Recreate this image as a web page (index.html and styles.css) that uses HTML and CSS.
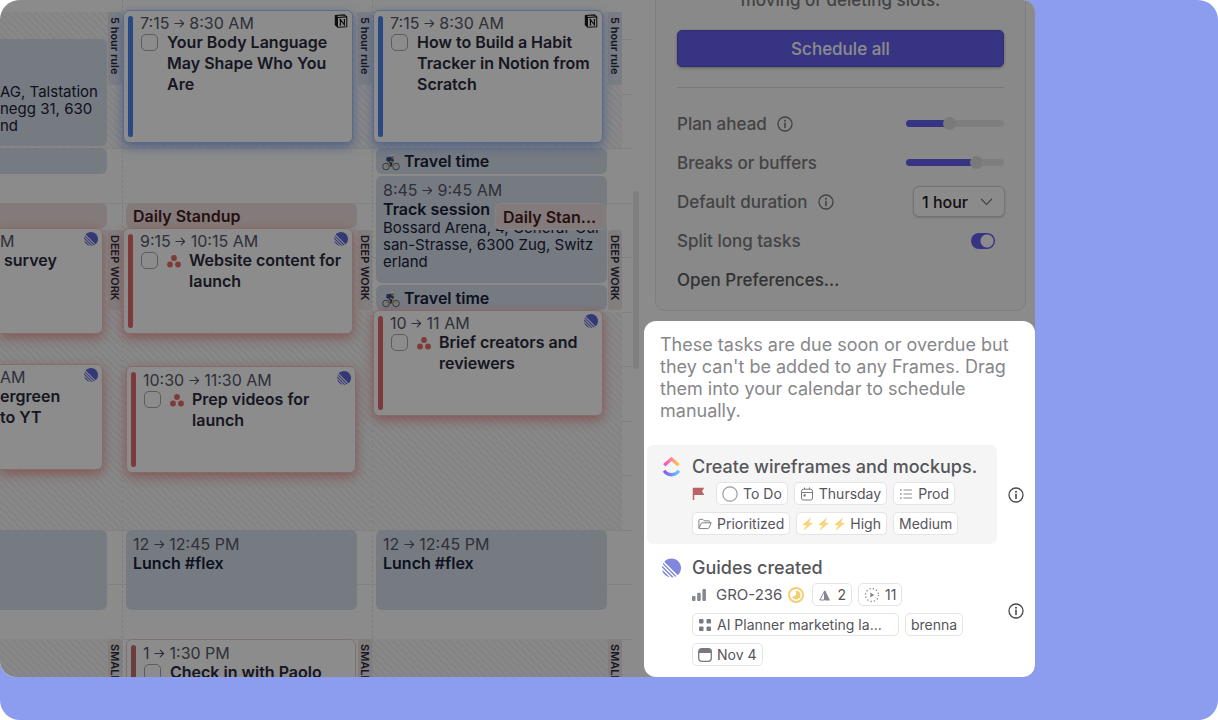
FILE: index.html
```html
<!DOCTYPE html>
<html lang="en">
<head>
    <meta charset="UTF-8">
    <meta name="viewport" content="width=device-width, initial-scale=1.0">
    <title>Planner</title>
    <link rel="stylesheet" href="styles.css">
</head>
<body>
    <!-- Shared icons -->
    <svg class="sprite" aria-hidden="true">
        <symbol id="arrow" viewBox="0 0 12 12">
            <path d="M1 6h9.5M6.8 2.3L10.5 6l-3.7 3.7" fill="none" stroke="currentColor" stroke-width="1.2" stroke-linecap="round" stroke-linejoin="round"/>
        </symbol>
        <symbol id="info" viewBox="0 0 16 16">
            <circle cx="8" cy="8" r="7" fill="none" stroke="currentColor" stroke-width="1.3"/>
            <circle cx="8" cy="4.8" r="1" fill="currentColor"/>
            <path d="M8 7.4v4" stroke="currentColor" stroke-width="1.6" stroke-linecap="round"/>
        </symbol>
        <symbol id="linear" viewBox="0 0 100 100">
            <path fill="currentColor" d="M1.2 61.5c-.2-1 .9-1.6 1.6-.8l36.5 36.5c.7.7.1 1.8-.8 1.6C20.1 94.4 5.6 79.9 1.2 61.5zM0 46.9c0 .3.1.5.3.7l52.100 52.100c.2.2.4.3.7.3 2.4-.2 4.700-.5 7-.9.8-.2 1.100-1.100.5-1.700L2.600 39.400c-.6-.6-1.500-.3-1.700.5-.4 2.300-.8 4.600-.9 7zM4.200 29.700c-.2.4-.1.800.2 1.100l64.800 64.800c.3.3.7.4 1.100.2 1.800-.8 3.500-1.700 5.100-2.700.5-.3.6-1.100.2-1.500L8.400 24.400c-.4-.4-1.200-.3-1.500.2-1 1.600-1.900 3.300-2.700 5.100zM12.700 18.100c-.4-.4-.4-1 0-1.400C21.800 6.500 35.200 0 50 0c27.600 0 50 22.400 50 50 0 14.900-6.500 28.200-16.700 37.400-.4.4-1 .3-1.400 0z"/>
        </symbol>
        <symbol id="notion" viewBox="0 0 16 16">
            <path d="M1.500 1.600L12 1l2.600 2.300v11.200l-10.300.6L1.500 12.500z" fill="#fff" stroke="#161616" stroke-width="1.200" stroke-linejoin="round"/>
            <path d="M1.500 1.600l3 2.300v11.200l-3-2.600z" fill="#161616"/>
            <path d="M1.500 1.600l3 2.300 10.100-.6" fill="none" stroke="#161616" stroke-width="1.200"/>
            <path d="M7.300 12.500V6.500l4.600 6V6.500M6.400 6.400h1.800M11 6.300h1.800M6.400 12.600h1.800" fill="none" stroke="#161616" stroke-width="1.300"/>
        </symbol>
        <symbol id="asana" viewBox="0 0 14 13">
            <g fill="currentColor"><circle cx="7" cy="3" r="2.900"/><circle cx="3" cy="9.500" r="2.900"/><circle cx="11" cy="9.500" r="2.900"/></g>
        </symbol>
        <symbol id="cyclist" viewBox="0 0 18 17">
            <g fill="none" stroke="#5f6466" stroke-width="1"><circle cx="4" cy="12.500" r="3.300"/><circle cx="14" cy="12.500" r="3.300"/></g>
            <path d="M4 12.500l3-3.500h5l2 3.500M7 9l2.500 3.500L12 9" fill="none" stroke="#c0b45c" stroke-width="1"/>
            <path d="M4.500 3.500L9 2.600l3.200 3.600-1.200 1.800-2.800-1.600-1 2-3-2z" fill="#35508c"/>
            <path d="M7.500 8l2 1.500-1 3" fill="none" stroke="#26304c" stroke-width="1.500"/>
            <circle cx="10.500" cy="3" r="1.600" fill="#c69a73"/>
            <path d="M7.800 2.300C8.300.2 11.500 0 12.300 2z" fill="#f8fafc"/>
        </symbol>
        <symbol id="bolt" viewBox="0 0 12 14">
            <path d="M9.500.5L.8 8h4.400l-3 5.500L11.200 6H6.800z" fill="#f8d77a" stroke="#efc55f" stroke-width=".5"/>
        </symbol>
    </svg>

    <div class="page">
        <main class="app">
            <section class="calendar" aria-label="Calendar">
                <div class="days">
                    <div class="day day-cut">
                        <div class="frame t-0715 to-0830"></div>
                        <div class="frame-label blue t-0715"><span>5 hour rule</span></div>
                        <div class="event tall t-0730 to-0830">
                            <p>AG, Talstation<br>negg 31, 630<br>nd</p>
                        </div>
                        <div class="event t-0830 to-0845"></div>
                        <div class="event red t-0900 to-0915"></div>
                        <div class="frame t-0915 to-1200"></div>
                        <div class="frame-label red t-0915"><span>DEEP WORK</span></div>
                        <article class="card red lifted t-0915 to-1015">
                            <header><time>M</time><svg class="source linear"><use href="#linear"/></svg></header>
                            <h3 class="last-word">survey</h3>
                        </article>
                        <article class="card red lifted t-1030 to-1130">
                            <header><time>AM</time><svg class="source linear"><use href="#linear"/></svg></header>
                            <h3>ergreen<br>to YT</h3>
                        </article>
                        <div class="event t-1200 to-1245"></div>
                        <div class="frame t-1300 to-1330"></div>
                        <div class="frame-label red t-1300"><span>SMALL TASKS</span></div>
                    </div>

                    <div class="day">
                        <div class="frame t-0715 to-0830"></div>
                        <div class="frame-label blue t-0715"><span>5 hour rule</span></div>
                        <article class="card blue lifted t-0715 to-0830">
                            <header><time>7:15 <svg class="arrow"><use href="#arrow"/></svg> 8:30 AM</time><svg class="source"><use href="#notion"/></svg></header>
                            <label class="task"><input type="checkbox"><span>Your Body Language May Shape Who You Are</span></label>
                        </article>
                        <div class="event red t-0900 to-0915"><h3>Daily Standup</h3></div>
                        <div class="frame t-0915 to-1200"></div>
                        <div class="frame-label red t-0915"><span>DEEP WORK</span></div>
                        <article class="card red lifted t-0915 to-1015">
                            <header><time>9:15 <svg class="arrow"><use href="#arrow"/></svg> 10:15 AM</time><svg class="source linear"><use href="#linear"/></svg></header>
                            <label class="task"><input type="checkbox"><svg class="asana"><use href="#asana"/></svg><span>Website content for launch</span></label>
                        </article>
                        <article class="card red t-1030 to-1130">
                            <header><time>10:30 <svg class="arrow"><use href="#arrow"/></svg> 11:30 AM</time><svg class="source linear"><use href="#linear"/></svg></header>
                            <label class="task"><input type="checkbox"><svg class="asana"><use href="#asana"/></svg><span>Prep videos for launch</span></label>
                        </article>
                        <div class="event t-1200 to-1245">
                            <time>12 <svg class="arrow"><use href="#arrow"/></svg> 12:45 PM</time>
                            <h3>Lunch #flex</h3>
                        </div>
                        <div class="frame-label red t-1300"><span>SMALL TASKS</span></div>
                        <article class="card plain t-1300 to-1330">
                            <header><time>1 <svg class="arrow"><use href="#arrow"/></svg> 1:30 PM</time></header>
                            <label class="task"><input type="checkbox"><span>Check in with Paolo</span></label>
                        </article>
                    </div>

                    <div class="day">
                        <div class="frame t-0715 to-0830"></div>
                        <div class="frame-label blue t-0715"><span>5 hour rule</span></div>
                        <article class="card blue lifted t-0715 to-0830">
                            <header><time>7:15 <svg class="arrow"><use href="#arrow"/></svg> 8:30 AM</time><svg class="source"><use href="#notion"/></svg></header>
                            <label class="task"><input type="checkbox"><span>How to Build a Habit Tracker in Notion from Scratch</span></label>
                        </article>
                        <div class="event t-0830 to-0845"><h3><svg class="cyclist"><use href="#cyclist"/></svg>Travel time</h3></div>
                        <div class="event t-0845 to-0945">
                            <time>8:45 <svg class="arrow"><use href="#arrow"/></svg> 9:45 AM</time>
                            <h3>Track session</h3>
                            <p>Bossard Arena, 4, General-Gui<br>san-Strasse, 6300 Zug, Switz<br>erland</p>
                        </div>
                        <div class="event red overlap t-0900 to-0915"><h3>Daily Stan...</h3></div>
                        <div class="event t-0945 to-1000"><h3><svg class="cyclist"><use href="#cyclist"/></svg>Travel time</h3></div>
                        <div class="frame t-1000 to-1200"></div>
                        <div class="frame-label red t-0915"><span>DEEP WORK</span></div>
                        <article class="card red lifted t-1000 to-1100">
                            <header><time>10 <svg class="arrow"><use href="#arrow"/></svg> 11 AM</time><svg class="source linear"><use href="#linear"/></svg></header>
                            <label class="task"><input type="checkbox"><svg class="asana"><use href="#asana"/></svg><span>Brief creators and reviewers</span></label>
                        </article>
                        <div class="event t-1200 to-1245">
                            <time>12 <svg class="arrow"><use href="#arrow"/></svg> 12:45 PM</time>
                            <h3>Lunch #flex</h3>
                        </div>
                        <div class="frame t-1300 to-1330"></div>
                        <div class="frame-label red t-1300"><span>SMALL TASKS</span></div>
                    </div>
                </div>
                <div class="scrollbar"></div>
            </section>

            <aside class="sidebar">
                <form class="planner">
                    <p class="hint">moving or deleting slots.</p>
                    <button type="button" class="schedule">Schedule all</button>
                    <hr>
                    <div class="setting">
                        <label for="ahead">Plan ahead</label>
                        <svg class="info"><use href="#info"/></svg>
                        <input type="range" id="ahead" class="ahead" min="0" max="100" value="43">
                    </div>
                    <div class="setting">
                        <label for="breaks">Breaks or buffers</label>
                        <input type="range" id="breaks" class="breaks" min="0" max="100" value="75">
                    </div>
                    <div class="setting">
                        <label for="duration">Default duration</label>
                        <svg class="info"><use href="#info"/></svg>
                        <span class="select">
                            <select id="duration"><option>1 hour</option></select>
                            <svg viewBox="0 0 14 8"><path d="M1.500 1l5.500 5.500L12.500 1" fill="none" stroke="currentColor" stroke-width="1.300" stroke-linecap="round"/></svg>
                        </span>
                    </div>
                    <div class="setting">
                        <label for="split">Split long tasks</label>
                        <input type="checkbox" id="split" class="switch" checked>
                    </div>
                    <div class="setting"><a href="#">Open Preferences...</a></div>
                </form>

                <section class="unplanned">
                    <p>These tasks are due soon or overdue but they can't be added to any Frames. Drag them into your calendar to schedule manually.</p>

                    <article class="todo">
                        <div class="todo-body active">
                            <svg class="logo" viewBox="0 0 18 20">
                                <defs>
                                    <linearGradient id="warm"><stop offset="0" stop-color="#f04fd0"/><stop offset="1" stop-color="#ffc94d"/></linearGradient>
                                    <linearGradient id="cool"><stop offset="0" stop-color="#8d56f5"/><stop offset="1" stop-color="#62c8f8"/></linearGradient>
                                </defs>
                                <path d="M1.800 8.200L9 2l7.200 6.200" fill="none" stroke="url(#warm)" stroke-width="3.400"/>
                                <path d="M1.600 13.800c4 5.200 10.800 5.200 14.800 0" fill="none" stroke="url(#cool)" stroke-width="3.400"/>
                            </svg>
                            <div>
                                <h2>Create wireframes and mockups.</h2>
                                <div class="tags">
                                    <svg class="flag" viewBox="0 0 12 13"><path d="M1 1v12" stroke="#b86464" stroke-width="1.500"/><path d="M1 .8h10.800L9.500 4.300l2.300 3.700H1z" fill="#b86464"/></svg>
                                    <span class="tag"><svg class="wide" viewBox="0 0 16 16"><circle cx="8" cy="8" r="7.200" fill="none" stroke="#9a9da6" stroke-width="1.200"/></svg>To Do</span>
                                    <span class="tag"><svg viewBox="0 0 14 14"><g fill="none" stroke="#77797f"><rect x="1.500" y="2.200" width="11" height="10.800" rx="2"/><path d="M1.500 5.500h11M4.500.5v2M9.500.5v2"/></g><rect x="3.500" y="7.300" width="2.200" height="2.200" fill="#77797f"/></svg>Thursday</span>
                                    <span class="tag"><svg viewBox="0 0 14 14"><path d="M4.500 3H13M4.500 7H13M4.500 11H13" stroke="#8b8d92"/><path d="M1 3h1.600M1 7h1.600M1 11h1.600" stroke="#8b8d92" stroke-width="1.400"/></svg>Prod</span>
                                    <span class="tag"><svg viewBox="0 0 15 12"><path d="M1 10.500V2.200C1 1.500 1.400 1 2.200 1h3l1.500 1.600h4.800c.7 0 1.100.4 1.100 1.100v1M1 10.500l2.600-5.200c.2-.4.500-.6 1-.6h9.600L11.800 10c-.3.6-.6.9-1.200.9H1.400z" fill="none" stroke="#77797f" stroke-linejoin="round"/></svg>Prioritized</span>
                                    <span class="tag"><svg class="bolt"><use href="#bolt"/></svg><svg class="bolt"><use href="#bolt"/></svg><svg class="bolt"><use href="#bolt"/></svg>High</span>
                                    <span class="tag">Medium</span>
                                </div>
                            </div>
                        </div>
                        <button type="button" class="more" aria-label="Details"><svg class="info"><use href="#info"/></svg></button>
                    </article>

                    <article class="todo">
                        <div class="todo-body">
                            <svg class="logo linear"><use href="#linear"/></svg>
                            <div>
                                <h2>Guides created</h2>
                                <div class="tags">
                                    <svg class="bars" viewBox="0 0 14 12"><g fill="#85878c"><rect y="7" width="3.500" height="5" rx="1"/><rect x="5.200" y="3.800" width="3.500" height="8.200" rx="1"/><rect x="10.400" width="3.500" height="12" rx="1"/></g></svg>
                                    <span class="plain-tag">GRO-236</span>
                                    <svg class="progress" viewBox="0 0 16 16"><circle cx="8" cy="8" r="7" fill="none" stroke="#f2cf72" stroke-width="2"/><path d="M8 3.500a4.500 4.500 0 1 1-4 6.600L8 8z" fill="#f2cf72"/></svg>
                                    <span class="tag estimate"><svg viewBox="0 0 14 14"><path d="M6.500 3v9H1.800z" fill="none" stroke="#85878c" stroke-linejoin="round"/><path d="M7 2l5 10.500H7z" fill="#85878c"/></svg>2</span>
                                    <span class="tag"><svg class="wide" viewBox="0 0 16 16"><circle cx="8" cy="8" r="6.500" fill="none" stroke="#85878c" stroke-width="1.300" stroke-dasharray="1.300 2.100"/><path d="M6.300 5.500L10.300 8l-4 2.500z" fill="#85878c"/></svg>11</span>
                                    <span class="tag project"><svg viewBox="0 0 14 14"><g fill="#77797f"><rect x="1" y="1" width="4.500" height="4.500" rx="1"/><rect x="8.500" y="1" width="4.500" height="4.500" rx="1"/><rect x="1" y="8.500" width="4.500" height="4.500" rx="1"/><rect x="8.500" y="8.500" width="4.500" height="4.500" rx="1"/></g></svg>AI Planner marketing la...</span>
                                    <span class="tag">brenna</span>
                                    <span class="tag"><svg viewBox="0 0 14 14"><rect x=".7" y=".7" width="12.600" height="12.600" rx="3" fill="none" stroke="#77797f" stroke-width="1.300"/><path d="M.7 5V3.500C.7 1.900 1.900.7 3.500.7h7c1.600 0 2.800 1.200 2.800 2.800V5z" fill="#77797f"/></svg>Nov 4</span>
                                </div>
                            </div>
                        </div>
                        <button type="button" class="more" aria-label="Details"><svg class="info"><use href="#info"/></svg></button>
                    </article>
                </section>
            </aside>

            <div class="backdrop"></div>
        </main>
    </div>
</body>
</html>
```

FILE: styles.css
```css
* {
    box-sizing: border-box;
}
body {
    margin: 0;
    background-color: white;
    font-family: Inter, sans-serif;
    font-size: 15px;
    color: #2a2a3c;
}
h2, h3, p {
    margin: 0;
}
.sprite {
    display: none;
}
.page {
    display: flex;
    height: 100vh;
    padding: 0 183px 43px 0;
    border-radius: 20px;
    background-color: #8c9df0;
    overflow: hidden;
}
.app {
    position: relative;
    display: flex;
    flex: 1;
    border-radius: 16px 12px 12px 16px;
    background-color: #fdfdfd;
    overflow: hidden;
}
/* Dims everything except the highlighted task list */
.backdrop {
    position: absolute;
    inset: 0;
    background-color: rgba(0, 0, 0, 0.45);
    z-index: 2;
}

/* Calendar */
.calendar {
    display: flex;
    flex: 1;
    min-width: 0;
}
.days {
    display: grid;
    grid-template-columns: 122px 1fr 1fr;
    flex: 1;
    padding-right: 11px;
    /* half-hour lines */
    background-image: linear-gradient(#ececec 1px, transparent 1px, transparent 55px, #ececec 55px, #ececec 56px, transparent 56px);
    background-size: 100% 109px;
    background-position: 0 39px;
}
.day {
    display: grid;
    /* one row per quarter hour, from 7:15 */
    grid-template-rows: 12px 27px 28px 27px repeat(6, 27px 27px 28px 27px);
    grid-template-columns: 1fr 14px;
    min-width: 0;
    border-left: 1px dashed #e6e6e6;
}
.day-cut {
    border-left: none;
}
.t-0715 { grid-row-start: 2; }
.t-0730 { grid-row-start: 3; }
.t-0830 { grid-row-start: 7; }
.t-0845 { grid-row-start: 8; }
.t-0900 { grid-row-start: 9; }
.t-0915 { grid-row-start: 10; }
.t-0945 { grid-row-start: 12; }
.t-1000 { grid-row-start: 13; }
.t-1030 { grid-row-start: 15; }
.t-1200 { grid-row-start: 21; }
.t-1300 { grid-row-start: 25; }
.to-0830 { grid-row-end: 7; }
.to-0845 { grid-row-end: 8; }
.to-0915 { grid-row-end: 10; }
.to-0945 { grid-row-end: 12; }
.to-1000 { grid-row-end: 13; }
.to-1015 { grid-row-end: 14; }
.to-1100 { grid-row-end: 17; }
.to-1130 { grid-row-end: 19; }
.to-1200 { grid-row-end: 21; }
.to-1245 { grid-row-end: 24; }
.to-1330 { grid-row-end: 27; }

.frame {
    grid-column: 1 / 3;
    background-image: repeating-linear-gradient(45deg, #f0f0f0 0 2px, #fafafa 3px 4px, #f0f0f0 5px);
}
.frame-label {
    grid-column: 2;
    grid-row-end: span 3;
    padding-top: 5px;
    border-radius: 3px;
    font-size: 11px;
    font-weight: 600;
    line-height: 14px;
    white-space: nowrap;
    writing-mode: vertical-rl;
}
.frame-label.blue {
    height: 73px;
    background-color: #dfe4ee;
}
.frame-label.red {
    height: 80px;
    background-color: #eee6e6;
}
.event {
    grid-column: 1;
    margin: 0 1px 2px 3px;
    padding: 5px 4px 0 7px;
    border-radius: 6px;
    background-color: #d8e0ec;
    color: #16213a;
    overflow: hidden;
}
.event.red {
    background-color: #efe0e0;
    color: #4a1a1a;
}
.event p {
    font-size: 15px;
    line-height: 17px;
    white-space: nowrap;
}
.event.overlap {
    justify-self: end;
    width: 112px;
    margin-bottom: 0;
    border: 1px solid #f8eeee;
    z-index: 1;
}
h3 {
    font-size: 16px;
    font-weight: 600;
    line-height: 20px;
}
.event h3:first-child {
    line-height: 16px;
}
time {
    display: block;
    font-size: 16px;
    line-height: 18px;
    color: #55586a;
    white-space: nowrap;
}
.arrow {
    width: 11px;
    height: 11px;
}
.cyclist {
    width: 18px;
    height: 17px;
    margin: -2px 4px -1px -1px;
    vertical-align: -3px;
}
.card {
    position: relative;
    grid-column: 1;
    margin: 0 2px 2px 3px;
    padding: 4px 4px 0 16px;
    border: 1px solid #f5c4c4;
    border-radius: 6px;
    background-color: white;
    box-shadow: 0 4px 12px rgba(235, 100, 100, 0.6);
}
/* Colored bar on the left edge */
.card::before {
    content: "";
    position: absolute;
    top: 5px;
    bottom: 5px;
    left: 4px;
    width: 5px;
    border-radius: 3px;
    background-color: #e56a6a;
}
.card.lifted {
    margin: -2px 5px 5px 0;
    padding-top: 3px;
}
.card.blue {
    border-color: #a5c2f8;
    box-shadow: 0 4px 12px rgba(80, 130, 240, 0.6);
}
.card.blue::before {
    background-color: #4a86f0;
}
.card.plain {
    border-color: #e3cccc;
    box-shadow: none;
}
.card.plain::before {
    background-color: #c47070;
}
.card header {
    display: flex;
    justify-content: space-between;
}
.source {
    width: 14px;
    height: 14px;
}
.linear {
    color: #6068d8;
}
.task {
    display: flex;
    align-items: flex-start;
    font-size: 16px;
    font-weight: 600;
    line-height: 21px;
}
.task input {
    flex: none;
    appearance: none;
    width: 17px;
    height: 17px;
    margin: 2px 9px 0 1px;
    border: 1px solid #a8a8ac;
    border-radius: 5px;
}
.asana {
    flex: none;
    width: 14px;
    height: 13px;
    margin: 5px 8px 0 0;
    color: #e86a6a;
}
/* First day is scrolled half out of view */
.day-cut .event {
    margin-left: 0;
    padding-left: 0;
    border-radius: 0 6px 6px 0;
}
.day-cut .event.tall {
    padding-top: 44px;
}
.day-cut .card {
    padding-left: 0;
    border-left: none;
    border-radius: 0 6px 6px 0;
}
.day-cut .card::before {
    display: none;
}
.day-cut h3 {
    line-height: 21px;
}
.last-word {
    padding-left: 4px;
}
.scrollbar {
    width: 6px;
    height: 178px;
    margin: 191px 5px 0 0;
    border-radius: 3px;
    background-color: #e8e8e8;
}

/* Sidebar */
.sidebar {
    display: flex;
    flex-direction: column;
    width: 391px;
}
.planner {
    margin: -12px 9px 10px 11px;
    padding: 0 21px 11px;
    border: 1px solid #e6e6e6;
    border-radius: 10px;
    background-color: #f9f9f9;
    font-size: 17px;
    font-weight: 500;
    color: #7a7a7c;
}
.hint {
    line-height: 22px;
    text-align: center;
}
.schedule {
    width: 100%;
    height: 37px;
    margin-top: 19px;
    border: 1px solid #5650cc;
    border-radius: 5px;
    background-color: #645ff0;
    box-shadow: 0 1px 3px rgba(0, 0, 0, 0.3);
    color: white;
    font: inherit;
}
hr {
    margin: 20px 0 16px;
    border: none;
    border-top: 1px solid #dadada;
}
.setting {
    display: flex;
    align-items: center;
    height: 39px;
}
.setting input, .select {
    margin: 0 0 0 auto;
}
.setting a {
    color: #5a5c62;
    text-decoration: none;
}
.info {
    width: 16px;
    height: 16px;
}
.setting .info {
    margin-left: 10px;
}
input[type="range"] {
    appearance: none;
    width: 98px;
    height: 7px;
    border-radius: 4px;
}
.ahead {
    background: linear-gradient(to right, #645ff0 43%, #e6e6e6 43%);
}
.breaks {
    background: linear-gradient(to right, #645ff0 72%, #e6e6e6 72%);
}
input[type="range"]::-webkit-slider-thumb {
    appearance: none;
    width: 13px;
    height: 13px;
    border-radius: 50%;
    background-color: #dedede;
}
.select {
    display: flex;
    align-items: center;
    position: relative;
    margin-right: -1px;
}
.select select {
    appearance: none;
    width: 92px;
    height: 31px;
    padding: 0 8px;
    border: 1px solid #d2d2d2;
    border-radius: 6px;
    background-color: #fdfdfd;
    box-shadow: 0 1px 2px rgba(0, 0, 0, 0.15);
    color: #1c1c20;
    font: inherit;
    font-size: 16px;
}
.select svg {
    position: absolute;
    right: 12px;
    width: 13px;
    height: 8px;
}
.setting .switch {
    appearance: none;
    width: 24px;
    height: 16px;
    margin-right: 9px;
    border-radius: 8px;
    background: radial-gradient(circle at 16px 8px, #fdfdfd 6px, #645ff0 7px);
}

/* Tasks that fit in no frame */
.unplanned {
    flex: 1;
    padding: 13px 0 0 3px;
    border-radius: 12px;
    background-color: white;
    z-index: 3;
}
.unplanned > p {
    margin: 0 24px 23px 13px;
    font-size: 18px;
    line-height: 22px;
    color: #87878a;
}
.todo {
    display: flex;
    align-items: center;
    margin-bottom: 2px;
}
.todo-body {
    display: flex;
    flex: 1;
    gap: 11px;
    padding: 10px 10px 9px 15px;
    border-radius: 6px;
}
.todo-body.active {
    background-color: #f5f5f5;
}
.todo h2 {
    margin-bottom: 3px;
    font-size: 18px;
    font-weight: 500;
    line-height: 24px;
    color: #55555a;
}
.logo {
    flex: none;
    width: 19px;
    height: 20px;
    margin-top: 2px;
}
.logo.linear {
    color: #8087dc;
}
.tags {
    display: flex;
    flex-wrap: wrap;
    align-items: center;
    gap: 7px 6px;
    font-size: 14px;
    color: #55555a;
}
.tag {
    display: flex;
    align-items: center;
    gap: 5px;
    height: 23px;
    padding: 0 5px;
    border: 1px solid #e4e4e6;
    border-radius: 5px;
    background-color: white;
}
.tag svg {
    width: 14px;
    height: 14px;
}
.tag .wide {
    width: 16px;
    height: 16px;
}
.tag .bolt {
    width: 11px;
}
.plain-tag {
    font-size: 15px;
}
.flag {
    width: 13px;
    height: 13px;
    margin-right: 5px;
}
.bars {
    width: 14px;
    height: 12px;
    margin-right: 4px;
}
.progress {
    width: 16px;
    height: 16px;
}
.estimate {
    margin-left: 2px;
}
.project {
    width: 207px;
}
.more {
    width: 38px;
    padding: 0;
    border: none;
    background: none;
    color: #4a4a4e;
    line-height: 0;
}
```
